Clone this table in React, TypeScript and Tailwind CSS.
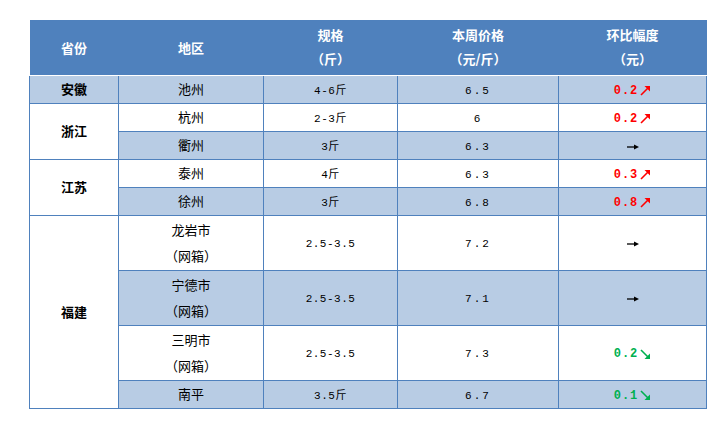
const cjk = "font-['SimSun','Noto_Sans_CJK_SC',sans-serif]";
const num = "font-['Liberation_Mono','Noto_Sans_CJK_SC',monospace] text-[11px]";

type Change = { v?: string; dir: 'up' | 'flat' | 'down' };

type Row = {
  province?: { name: string; span: number };
  area: string[];
  spec: string;
  price: string;
  change: Change;
  shade: boolean;
};

const rows: Row[] = [
  { province: { name: '安徽', span: 1 }, area: ['池州'], spec: '4-6斤', price: '6.5', change: { v: '0.2', dir: 'up' }, shade: true },
  { province: { name: '浙江', span: 2 }, area: ['杭州'], spec: '2-3斤', price: '6', change: { v: '0.2', dir: 'up' }, shade: false },
  { area: ['衢州'], spec: '3斤', price: '6.3', change: { dir: 'flat' }, shade: true },
  { province: { name: '江苏', span: 2 }, area: ['泰州'], spec: '4斤', price: '6.3', change: { v: '0.3', dir: 'up' }, shade: false },
  { area: ['徐州'], spec: '3斤', price: '6.8', change: { v: '0.8', dir: 'up' }, shade: true },
  { province: { name: '福建', span: 4 }, area: ['龙岩市', '（网箱）'], spec: '2.5-3.5', price: '7.2', change: { dir: 'flat' }, shade: false },
  { area: ['宁德市', '（网箱）'], spec: '2.5-3.5', price: '7.1', change: { dir: 'flat' }, shade: true },
  { area: ['三明市', '（网箱）'], spec: '2.5-3.5', price: '7.3', change: { v: '0.2', dir: 'down' }, shade: false },
  { area: ['南平'], spec: '3.5斤', price: '6.7', change: { v: '0.1', dir: 'down' }, shade: true },
];

const ChangeCell = ({ c }: { c: Change }) => {
  if (c.dir === 'flat') {
    return (
      <svg width="14" height="8" viewBox="0 0 14 8" className="inline-block">
        <path d="M1 4 H11" stroke="#000" strokeWidth="1.3" />
        <path d="M8 1.5 L13 4 L8 6.5 Z" fill="#000" />
      </svg>
    );
  }
  const up = c.dir === 'up';
  const color = up ? 'text-[#ff0000]' : 'text-[#00b050]';
  return (
    <span className={`inline-flex items-center gap-[2px] font-bold ${color}`}>
      <span className={num + ' text-[12px] font-bold tracking-[1px]'}>{c.v}</span>
      {up ? (
        <svg width="11" height="11" viewBox="0 0 11 11">
          <path d="M1 10 L8.5 2.5" stroke="#ff0000" strokeWidth="1.6" />
          <path d="M4.5 1 L10 1 L10 6.5 Z" fill="#ff0000" />
        </svg>
      ) : (
        <svg width="11" height="11" viewBox="0 0 11 11">
          <path d="M1 1 L8.5 8.5" stroke="#00b050" strokeWidth="1.6" />
          <path d="M10 4.5 L10 10 L4.5 10 Z" fill="#00b050" />
        </svg>
      )}
    </span>
  );
};

export default function App() {
  const td = 'border border-[#4f81bd] text-center align-middle p-0 text-[13px] text-black';
  return (
    <div className={`min-h-[424px] w-[725px] bg-white pl-[29px] pt-[20px] ${cjk}`}>
      <table className="border-collapse table-fixed w-[677px]">
        <colgroup>
          <col className="w-[89px]" />
          <col className="w-[145px]" />
          <col className="w-[134px]" />
          <col className="w-[161px]" />
          <col className="w-[148px]" />
        </colgroup>
        <thead>
          <tr className="h-[55px] bg-[#4f81bd] text-white text-[13px] font-bold">
            <th className="border-b border-white p-0">省份</th>
            <th className="border-b border-white p-0">地区</th>
            <th className="border-b border-white p-0 leading-[24px]">
              <div>规格</div>
              <div>（斤）</div>
            </th>
            <th className="border-b border-white p-0 leading-[24px]">
              <div>本周价格</div>
              <div>（元/斤）</div>
            </th>
            <th className="border-b border-white p-0 leading-[24px]">
              <div>环比幅度</div>
              <div>（元）</div>
            </th>
          </tr>
        </thead>
        <tbody>
          {rows.map((r, i) => {
            const bg = r.shade ? 'bg-[#b8cce4]' : 'bg-white';
            const tall = r.area.length > 1;
            return (
              <tr key={i} className={tall ? 'h-[55px]' : 'h-[28px]'}>
                {r.province && (
                  <td
                    rowSpan={r.province.span}
                    className={`${td} font-bold ${r.province.span === 1 ? 'bg-[#b8cce4]' : 'bg-white'}`}
                  >
                    {r.province.name}
                  </td>
                )}
                <td className={`${td} ${bg} leading-[26px]`}>
                  {r.area.map((a) => (
                    <div key={a}>{a}</div>
                  ))}
                </td>
                <td className={`${td} ${bg}`}>
                  <span className={num + ' tracking-[0.5px]'}>{r.spec}</span>
                </td>
                <td className={`${td} ${bg}`}>
                  <span className={num + ' tracking-[2px]'}>{r.price}</span>
                </td>
                <td className={`${td} ${bg}`}>
                  <ChangeCell c={r.change} />
                </td>
              </tr>
            );
          })}
        </tbody>
      </table>
    </div>
  );
}
